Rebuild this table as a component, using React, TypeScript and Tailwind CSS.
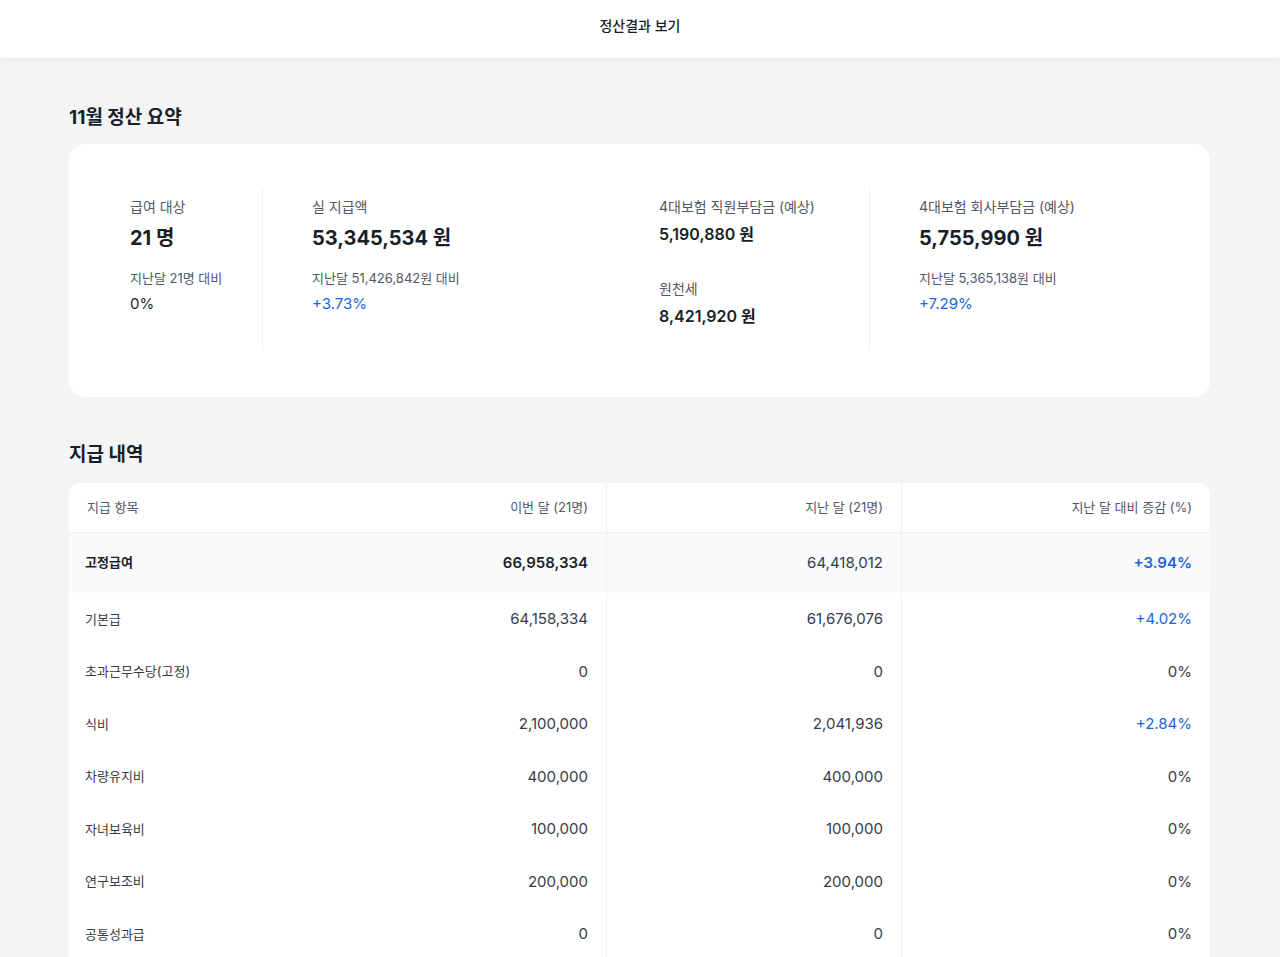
import React from 'react';

const font = { fontFamily: "Inter, 'Noto Sans CJK KR', 'Noto Sans', sans-serif" };

type Row = { name: string; cur: string; prev: string; diff: string; bold?: boolean };

const rows: Row[] = [
  { name: '고정급여', cur: '66,958,334', prev: '64,418,012', diff: '+3.94%', bold: true },
  { name: '기본급', cur: '64,158,334', prev: '61,676,076', diff: '+4.02%' },
  { name: '초과근무수당(고정)', cur: '0', prev: '0', diff: '0%' },
  { name: '식비', cur: '2,100,000', prev: '2,041,936', diff: '+2.84%' },
  { name: '차량유지비', cur: '400,000', prev: '400,000', diff: '0%' },
  { name: '자녀보육비', cur: '100,000', prev: '100,000', diff: '0%' },
  { name: '연구보조비', cur: '200,000', prev: '200,000', diff: '0%' },
  { name: '공통성과급', cur: '0', prev: '0', diff: '0%' },
];

const App = () => {
  return (
    <div className="min-h-screen bg-[#f3f4f6] text-[#191f28]" style={font}>
      {/* Top bar */}
      <header className="h-[59px] bg-white shadow-[0_1px_3px_rgba(0,0,0,0.06)] border-b border-[#ebedf0] flex items-center justify-center">
        <h1 className="text-[14px] font-medium -mt-[7px]">정산결과 보기</h1>
      </header>

      <main className="w-[1141px] ml-[69px] pt-[45px]">
        <h2 className="text-[19px] font-bold leading-[28px] mb-[12px]">11월 정산 요약</h2>

        {/* Summary card */}
        <div className="bg-white rounded-2xl pt-[44px] pb-[47px] flex">
          <div className="w-[193px] h-[162px] pl-[61px] pt-[9px]">
            <div className="text-[14px] leading-[20px] text-[#4e5968]">급여 대상</div>
            <div className="text-[20px] leading-[28px] font-bold mt-[7px]">21 명</div>
            <div className="text-[13px] leading-[20px] text-[#4e5968] mt-[16px]">지난달 21명 대비</div>
            <div className="text-[15px] leading-[22px] mt-[5px]">0%</div>
          </div>
          <div className="w-[348px] h-[162px] border-l border-[#eef0f2] pl-[49px] pt-[9px]">
            <div className="text-[14px] leading-[20px] text-[#4e5968]">실 지급액</div>
            <div className="text-[20px] leading-[28px] font-bold mt-[7px]">53,345,534 원</div>
            <div className="text-[13px] leading-[20px] text-[#4e5968] mt-[16px]">지난달 51,426,842원 대비</div>
            <div className="text-[15px] leading-[22px] mt-[5px] text-[#1b64da]">+3.73%</div>
          </div>
          <div className="w-[259px] h-[162px] pl-[49px] pt-[9px]">
            <div className="text-[14px] leading-[20px] text-[#4e5968]">4대보험 직원부담금 (예상)</div>
            <div className="text-[16px] leading-[24px] font-semibold mt-[5px]">5,190,880 원</div>
            <div className="text-[14px] leading-[20px] text-[#4e5968] mt-[33px]">원천세</div>
            <div className="text-[16px] leading-[24px] font-semibold mt-[5px]">8,421,920 원</div>
          </div>
          <div className="flex-1 h-[162px] border-l border-[#eef0f2] pl-[49px] pt-[9px]">
            <div className="text-[14px] leading-[20px] text-[#4e5968]">4대보험 회사부담금 (예상)</div>
            <div className="text-[20px] leading-[28px] font-bold mt-[7px]">5,755,990 원</div>
            <div className="text-[13px] leading-[20px] text-[#4e5968] mt-[16px]">지난달 5,365,138원 대비</div>
            <div className="text-[15px] leading-[22px] mt-[5px] text-[#1b64da]">+7.29%</div>
          </div>
        </div>

        <h2 className="text-[19px] font-bold leading-[28px] mt-[44px] mb-[14px]">지급 내역</h2>

        {/* Payment table */}
        <div className="bg-white rounded-t-xl overflow-hidden">
          <div className="grid grid-cols-[537px_295px_1fr] h-[50px] border-b border-[#eef0f2] text-[13px] text-[#4e5968]">
            <div className="flex items-center justify-between pl-[18px] pr-[18px]">
              <span>지급 항목</span>
              <span>이번 달 (21명)</span>
            </div>
            <div className="flex items-center justify-end pr-[18px] border-l border-[#eef0f2]">지난 달 (21명)</div>
            <div className="flex items-center justify-end pr-[18px] border-l border-[#eef0f2]">지난 달 대비 증감 (%)</div>
          </div>
          {rows.map((r, i) => (
            <div
              key={i}
              className={`grid grid-cols-[537px_295px_1fr] text-[15px] ${r.bold ? 'h-[60px] bg-[#f9fafb]' : 'h-[52.5px]'}`}
            >
              <div className="flex items-center justify-between pl-[16px] pr-[18px]">
                <span className={r.bold ? 'text-[13px] font-semibold' : 'text-[13px] text-[#333d4b]'}>{r.name}</span>
                <span className={r.bold ? 'font-semibold' : 'text-[#333d4b]'}>{r.cur}</span>
              </div>
              <div className="flex items-center justify-end pr-[18px] border-l border-[#eef0f2] text-[#333d4b]">
                {r.prev}
              </div>
              <div
                className={`flex items-center justify-end pr-[18px] border-l border-[#eef0f2] ${r.diff.startsWith('+') ? 'text-[#1b64da]' : 'text-[#333d4b]'} ${r.bold ? 'font-semibold' : ''}`}
              >
                {r.diff}
              </div>
            </div>
          ))}
        </div>
      </main>
    </div>
  );
};

export default App;
